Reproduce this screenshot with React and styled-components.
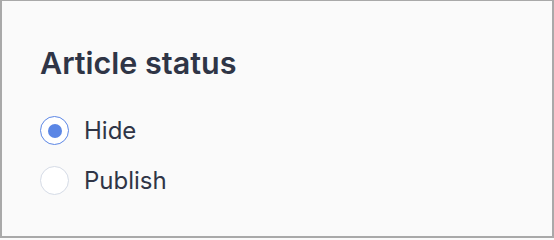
import styled, { createGlobalStyle } from 'styled-components'

const Global = createGlobalStyle`
    html, body {
        margin: 0;
        padding: 0;
        background: #fafafa;
    }
    body {
        font-family: Inter, "Noto Sans", sans-serif;
        color: #2f3546;
    }
`

const Panel = styled.div`
    box-sizing: border-box;
    width: 554px;
    height: 238px;
    background: #fafafa;
    border: 2px solid #a9a9a9;
    border-top-width: 1px;
    padding: 43px 38px 0;
`

const Title = styled.h2`
    margin: 0 0 35px;
    font-size: 30.5px;
    font-weight: 560;
    line-height: 37px;
`

const Options = styled.div`
    display: flex;
    flex-direction: column;
    gap: 21px;
`

const Option = styled.label`
    display: flex;
    align-items: center;
    gap: 15px;
    font-size: 24px;
    line-height: 29px;
    cursor: pointer;
`

const Radio = styled.span`
    box-sizing: border-box;
    flex: none;
    width: 29px;
    height: 29px;
    border-radius: 50%;
    border: 1.5px solid ${p => (p.checked ? '#5b86e5' : '#d5dbe6')};
    background: #fff;
    display: flex;
    align-items: center;
    justify-content: center;

    &::after {
        content: '';
        width: 14px;
        height: 14px;
        border-radius: 50%;
        background: ${p => (p.checked ? '#5b86e5' : 'transparent')};
    }
`

const options = [
    { label: 'Hide', checked: true },
    { label: 'Publish', checked: false },
]

const App = () => {
    return (
        <Panel>
            <Global />
            <Title>Article status</Title>
            <Options>
                {options.map(o => (
                    <Option key={o.label}>
                        <Radio checked={o.checked} />
                        <span>{o.label}</span>
                    </Option>
                ))}
            </Options>
        </Panel>
    )
}

export default App
